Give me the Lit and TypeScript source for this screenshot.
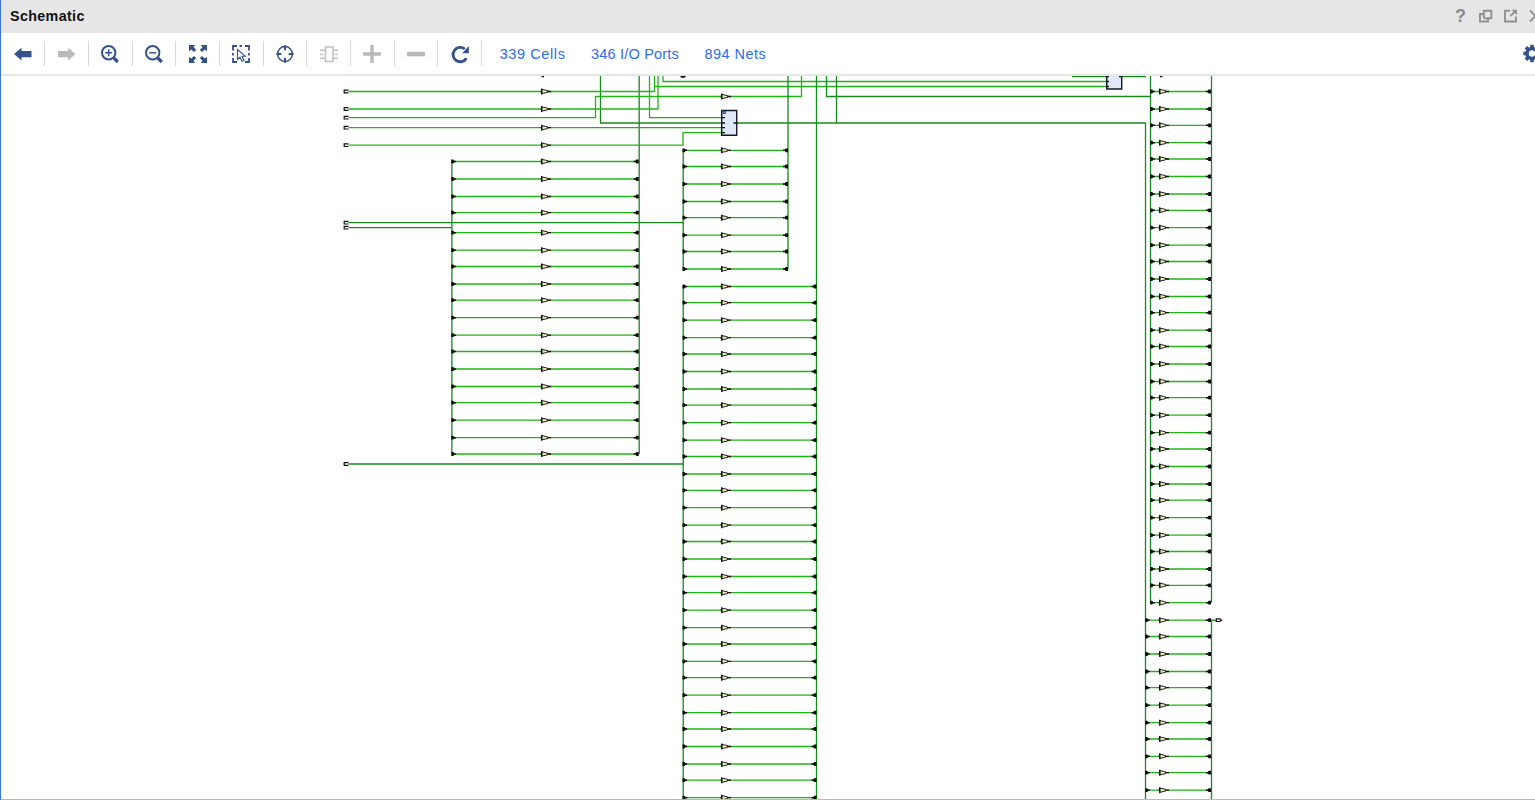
import { LitElement, html, svg, css } from "lit";
import { customElement } from "lit/decorators.js";

const LEFT = [161.5, 179, 196.5, 212.7, 232.7, 250.2, 266.5, 284, 300.2, 317.7, 335.2, 351.5, 369, 386.5, 402.7, 420.2, 437.7, 454];
const MID_A = [150.3, 166.5, 184, 201.5, 217.7, 235.2, 251.5, 269];
const MID_B = [286.5, 302.7, 320.2, 337.7, 354, 371.5, 389, 405.2, 422.7, 440.2, 456.5, 474, 490.3, 507.7, 525.2, 541.5, 559, 576.5, 592.7, 610.2, 627.7, 644, 661.3, 677.7, 695.2, 712.7, 729, 746.5, 764, 780.2, 797.7];
const RIGHT_A = [91.5, 109, 125.3, 142.7, 159, 176.5, 194, 210.3, 227.7, 245.2, 261.5, 279, 296.5, 312.7, 330.2, 346.5, 364, 381.5, 397.7, 415.2, 432.7, 449, 466.5, 484, 500.2, 517.7, 535.2, 551.5, 569, 585.3, 602.7];
const RIGHT_B = [620.2, 636.5, 654, 671.5, 687.7, 705.2, 722.7, 739, 756.3, 772.7, 790.2];

const wire = (d: string, dark = false) => svg`<path class=${dark ? "wire dark" : "wire"} d=${d} />`;
const buffer = (x: number, y: number) => svg`<g transform="translate(${x} ${y})">
  <path class="buf" d="M-3.2-2.100 2.500-.9V.9L-3.200 2.100Z"/><path class="ink" d="M-4.500 0h1.500M-3.300-3v6M2.500 0h3.500"/></g>`;
const port = (x: number, y: number) => svg`<path class="port" d="M${x + 4.3} ${y - 1.3}h-4.300v2.600h4.300"/>`;
const row = (x1: number, x2: number, bx: number, y: number) => svg`
  ${wire(`M${x1} ${y}H${x2}`)}
  <path class="tap" d="M${x1 - 0.5} ${y - 1.9}h2l1 1.200h1.600v1.400h-1.600l-1 1.200h-2z"/>
  <path class="tap" d="M${x2} ${y - 1.9}h-2.400l-.8 1.200h-1.800v1.400h1.800l.8 1.200h2.400z"/>
  ${buffer(bx, y)}`;

const ICONS = [
  svg`<path class="fill" d="M0 9 7.500 2.700V6H17.500v6.200H7.500v3.300Z"/>`,
  svg`<path class="fill off" d="M17.500 9 10 2.700V6H0v6.200h10v3.300Z"/>`,
  svg`<g class="line"><circle cx="7.700" cy="7.800" r="6.700"/><path stroke-width="3.200" d="m12.800 13 4 4"/><path stroke-width="1.500" d="M4.200 7.800h7M7.700 4.300v7"/></g>`,
  svg`<g class="line"><circle cx="7.700" cy="7.800" r="6.700"/><path stroke-width="3.200" d="m12.800 13 4 4"/><path stroke-width="1.500" d="M4.200 7.800h7"/></g>`,
  svg`<path class="fill" d="M0 0h6.300L4.500 2 7.200 4.900 5 7.100 2.200 4.500 0 6.300ZM18 0v6.300l-2.200-1.800L13 7.100l-2.200-2.200L13.500 2l-1.800-2ZM0 18v-6.300l2.200 1.800L5 10.900l2.200 2.200L4.500 16l1.800 2ZM18 18h-6.300l1.800-2-2.700-2.900 2.200-2.200 2.800 2.600 2.200-1.800Z"/>`,
  svg`<g class="line"><path stroke-width="1.800" d="M1 5.500V1h4M7.500 1h2.500M13 1h4v4.500M17 8v2.500M17 13v4h-4M5 17H1v-4M1 8v2.500"/><path stroke-width="1.100" d="M5.500 4.500v10l2.500-2.300 2 4 2-1-2-4h3.200Z"/></g>`,
  svg`<g class="line"><circle cx="9" cy="9" r="7.400" stroke-width="1.500"/><path stroke-width="2" d="M9 .3v5M9 12.700v5M.3 9h5M12.700 9h5"/></g>`,
  svg`<g class="line off"><path stroke-width="1.600" d="M5.500 2h7.500v14.500H5.500ZM0 5.300h5.500M0 9.500h3.500M0 13.200h5.500M13 5.300h5M14.500 9.500H18M13 13.200h5"/></g>`,
  svg`<path class="fill off" d="M7.300 0h3.500v7.300H18v3.400h-7.200V18H7.300v-7.300H0V7.300h7.300Z"/>`,
  svg`<path class="fill off" d="M0 6.800h18v4.500H0Z"/>`,
  svg`<g class="line"><path stroke-width="2.900" d="M15.400 13.300A7.200 7.200 0 1 1 13.800 4"/></g><path class="fill" d="M17.800 1v7.200h-6.600Z"/>`,
];

@customElement("app-root")
export class AppRoot extends LitElement {
  static styles = css`
    :host { display: flex; flex-direction: column; width: 100%; height: 800px; box-sizing: border-box;
      overflow: hidden; background: #fff; border-left: 1px solid #3c78d8; font: 14.5px "Liberation Sans", Arial, sans-serif; }
    .title { flex: 0 0 33px; display: flex; align-items: center; justify-content: space-between; background: #e6e6e6; }
    .name { padding: 0 0 2px 9px; font-weight: 700; font-size: 14.300px; letter-spacing: .36px; color: #111; }
    .controls { display: block; width: 84px; height: 33px; }
    .toolbar { flex: 0 0 41px; box-sizing: border-box; display: flex; align-items: center; overflow: hidden; padding-left: .6px; }
    .tool { flex: 0 0 43.7px; height: 25px; box-sizing: border-box; display: flex; align-items: center; justify-content: center; border-right: 1.400px solid #d8d8d8; }
    .tool svg { width: 18px; height: 18px; flex: none; overflow: visible; }
    .fill { fill: #34528a; }
    .line { fill: none; stroke: #34528a; stroke-width: 2; }
    .fill.off { fill: #b9b9b9; }
    .line.off { stroke: #c2c2c2; }
    .links { display: flex; gap: 25.500px; padding-left: 17.500px; color: #2d6bf8; white-space: nowrap; }
    .cells { letter-spacing: .6px; }
    .ports { letter-spacing: .2px; }
    .nets { letter-spacing: .45px; }
    .gear { width: 13px; height: 20px; margin-left: auto; }
    .canvas { flex: 1; min-height: 0; border-top: 2px solid #e6e6e6; }
    .sheet { display: block; width: 1534px; height: 724px; }
    .wire { fill: none; stroke: #22b414; stroke-width: 1.300; }
    .dark { stroke: #148a1c; }
    .buf { fill: #f0ebc0; stroke: #222; stroke-width: 1; }
    .ink { fill: none; stroke: #111; stroke-width: 1.300; }
    .port { fill: #fff; stroke: #111; stroke-width: 1.200; }
    .tap { fill: #0a0a0a; }
    .cell { fill: #dfe9f8; stroke: #111827; stroke-width: 1.400; }
    .mark { fill: #7fa4d8; stroke: #1f4788; stroke-width: 1; }
    .gray { fill: none; stroke: #929292; stroke-width: 1.900; }
    .help { fill: #8a8a8a; font: 700 18px "Liberation Sans", Arial, sans-serif; }
    .edge { fill: #a9b9dc; }
  `;

  render() {
    return html`
      <div class="title">
        <span class="name">Schematic</span>
        <svg class="controls" viewBox="1451 0 84 33">
          <text class="help" x="1455" y="22.300">?</text>
          <path class="gray" d="M1483.800 18.300V10.700h7.500v7.600h-7.500M1484 14h-4v7.500h8v-3"/>
          <path class="gray" d="M1510 10.800h-5v10.700h11v-5M1510.500 16l4-4"/>
          <path fill="#929292" d="M1511.500 9.700h5.500v5.500Z"/>
          <path class="gray" d="m1530 10.500 5.500 5.500-5.500 5.500"/>
        </svg>
      </div>
      <div class="toolbar">
        ${ICONS.map((icon) => html`<span class="tool"><svg viewBox="0 0 18 18">${icon}</svg></span>`)}
        <div class="links"><span class="cells">339 Cells</span><span class="ports">346 I/O Ports</span><span class="nets">894 Nets</span></div>
        <svg class="gear" viewBox="0 0 13 20">
          <circle cx="10" cy="9.500" r="5" fill="none" stroke="#34528a" stroke-width="3.600"/>
          ${[0, 45, 90, 135, 180, 225, 270, 315].map((a) => svg`<path class="fill" transform="rotate(${a} 10 9.500)" d="M8.200 .8h3.600V4.500H8.200Z"/>`)}
        </svg>
      </div>
      <div class="canvas">
        <svg class="sheet" viewBox="1 76 1534 724">
          ${wire("M600.5 76V123H722M639.200 76V454", true)}
          ${wire("M346 91.500H654.500V76M346 109H658V76M346 117.700H595.500V96.500H801.500V76M346 127.700H722M346 145.200H683V132.700H722")}
          ${wire("M649.500 76V117.700H722M663 76V81.500H1107M654.500 86.500H1107")}
          ${wire("M788 76V269M816.500 76V800M836.500 76V123M826.500 76V96.500H1150M737 123H1145.500V800M1072 76.500H1107M1121 76.500H1146M1150.500 76V602.700M1211.500 76V602.700M1211.500 620V800", true)}
          ${wire("M346 222.700H683M346 227.700H452M346 464H683", true)}
          ${wire("M451.900 161.500V454M683.200 150V269M683.200 286.500V800", true)}
          ${wire("M1211 620.200H1217", true)}
          ${LEFT.map((y) => row(451.8, 638.7, 545, y))}
          ${MID_A.map((y) => row(683, 788, 725, y))}
          ${MID_B.map((y) => row(683, 816.5, 725, y))}
          ${RIGHT_A.map((y) => row(1150.7, 1211, 1163, y))}
          ${RIGHT_B.map((y) => row(1145.7, 1211, 1163, y))}
          ${[91.5, 109, 127.7, 145.2].map((y) => buffer(545, y))}
          ${buffer(725, 96.5)}
          ${[91.5, 109, 117.7, 127.7, 145.2, 222.7, 227.7, 464].map((y) => port(344.2, y))}
          <path class="port" d="M1216.300 618.900h3.500l1.800 1.300-1.800 1.300h-3.500z"/>
          <path class="cell" d="M721.700 110.500h15v24.800h-15zM1106.700 70h15v19h-15z"/>
          <path class="mark" d="M723 111.300h2.500v2.200H723z"/>
          <path class="ink" d="M721 117.700h4M721 123h4M721 127.700h4M721 132.700h4M733.500 123h4M1106 76.500h3M1106 81.500h3M1106 86.500h3M1119 76.500h3M541.500 76.500h2.500M1160 76.500h2.500"/>
          <path class="tap" d="M680 76h6l-1.500 1.800h-3z"/>
          <path class="edge" d="M1 799h1534v1H1z"/>
        </svg>
      </div>`;
  }
}
